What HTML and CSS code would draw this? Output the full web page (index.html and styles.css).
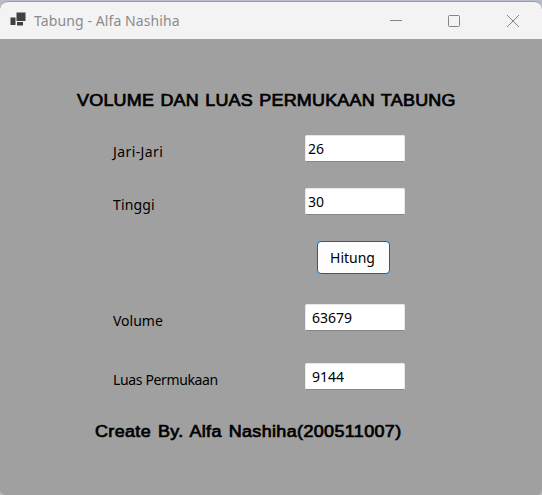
FILE: index.html
```
<!DOCTYPE html>
<html lang="id">
<head>
<meta charset="utf-8">
<title>Tabung - Alfa Nashiha</title>
<link rel="stylesheet" href="styles.css">
</head>
<body>
<div class="window">
  <header class="titlebar">
    <svg class="app-icon" width="16" height="16" viewBox="0 0 16 16" fill="#404040"><path d="M6.500 .5h9v8.500h-9zM.5 5.500H5.500v7.500H.5zM7 10h6v3.500H7z"/></svg>
    <span class="title">Tabung - Alfa Nashiha</span>
    <svg class="controls" width="132" height="14" viewBox="0 0 132 14" fill="none" stroke="#858585"><path d="M0 6.500h12"/><rect x="58.500" y="1.500" width="11" height="11" rx="1"/><path d="M117 1l12 12M129 1l-12 12"/></svg>
  </header>
  <main class="form">
    <h1 class="heading">VOLUME DAN LUAS PERMUKAAN TABUNG</h1>
    <div class="row"><label class="label l-jari">Jari-Jari</label><div class="field">26</div></div>
    <div class="row row-height"><label class="label l-tinggi">Tinggi</label><div class="field">30</div></div>
    <button class="button">Hitung</button>
    <div class="row row-volume"><label class="label l-volume">Volume</label><div class="field result">63679</div></div>
    <div class="row row-area"><label class="label l-luas">Luas Permukaan</label><div class="field result">9144</div></div>
    <p class="credit">Create By. Alfa Nashiha(200511007)</p>
  </main>
</div>
</body>
</html>
```
FILE: styles.css
```
* { box-sizing: border-box; }
body {
  margin: 0;
  background: #b9bccb;
  font: 14px/20px "Noto Sans", sans-serif;
  color: #000;
}
.window {
  height: 495px;
  padding-top: 1px;
  overflow: hidden;
}
.titlebar {
  display: flex;
  align-items: center;
  height: 38px;
  padding: 0 20px 0 10px;
  background: #f3f3f3;
  border-top: 1px solid #9b9ca6;
  border-radius: 8px 8px 0 0;
}
.app-icon { margin-top: -1px; }
.title {
  margin-left: 8px;
  color: #8b8b8b;
  letter-spacing: 0.1px;
  white-space: nowrap;
}
.controls { margin-left: auto; }
.form {
  height: 456px;
  padding: 52px 0 0 113px;
  background: #a0a0a0;
  border-radius: 0 0 5px 5px;
}
.heading, .credit {
  margin: 0;
  font: 400 16px/20px "Liberation Sans", sans-serif;
  -webkit-text-stroke: 0.7px #000;
  white-space: nowrap;
  width: max-content;
  transform: scaleX(1.12);
  transform-origin: left;
}
.heading {
  margin: 0 0 24px -36px;
  letter-spacing: 0.22px;
  word-spacing: 0.9px;
}
.row {
  display: grid;
  grid-template-columns: 192px 100px;
  height: 27px;
}
.row-height { margin-top: 26px; }
.label {
  padding-top: 7px;
  white-space: nowrap;
}
.l-jari { letter-spacing: 0.4px; }
.l-tinggi { letter-spacing: 0.15px; }
.l-luas { letter-spacing: -0.36px; }
.field {
  height: 27px;
  padding: 3px 2px 0;
  line-height: 20px;
  background: #fff;
  border: 1px solid #e8e8e8;
  border-bottom-color: #858585;
  border-radius: 2px;
}
.result { padding-left: 6px; }
.button {
  display: block;
  width: 73px;
  height: 33px;
  margin: 26px 0 30px 204px;
  padding: 0 2px 0 0;
  font: inherit;
  color: #000;
  background: #fdfdfd;
  border: 1px solid #0067c0;
  border-radius: 4px;
}
.row-area { margin-top: 32px; }
.credit {
  margin: 32px 0 0 -18px;
  letter-spacing: 0.34px;
  word-spacing: 1.3px;
}
```
